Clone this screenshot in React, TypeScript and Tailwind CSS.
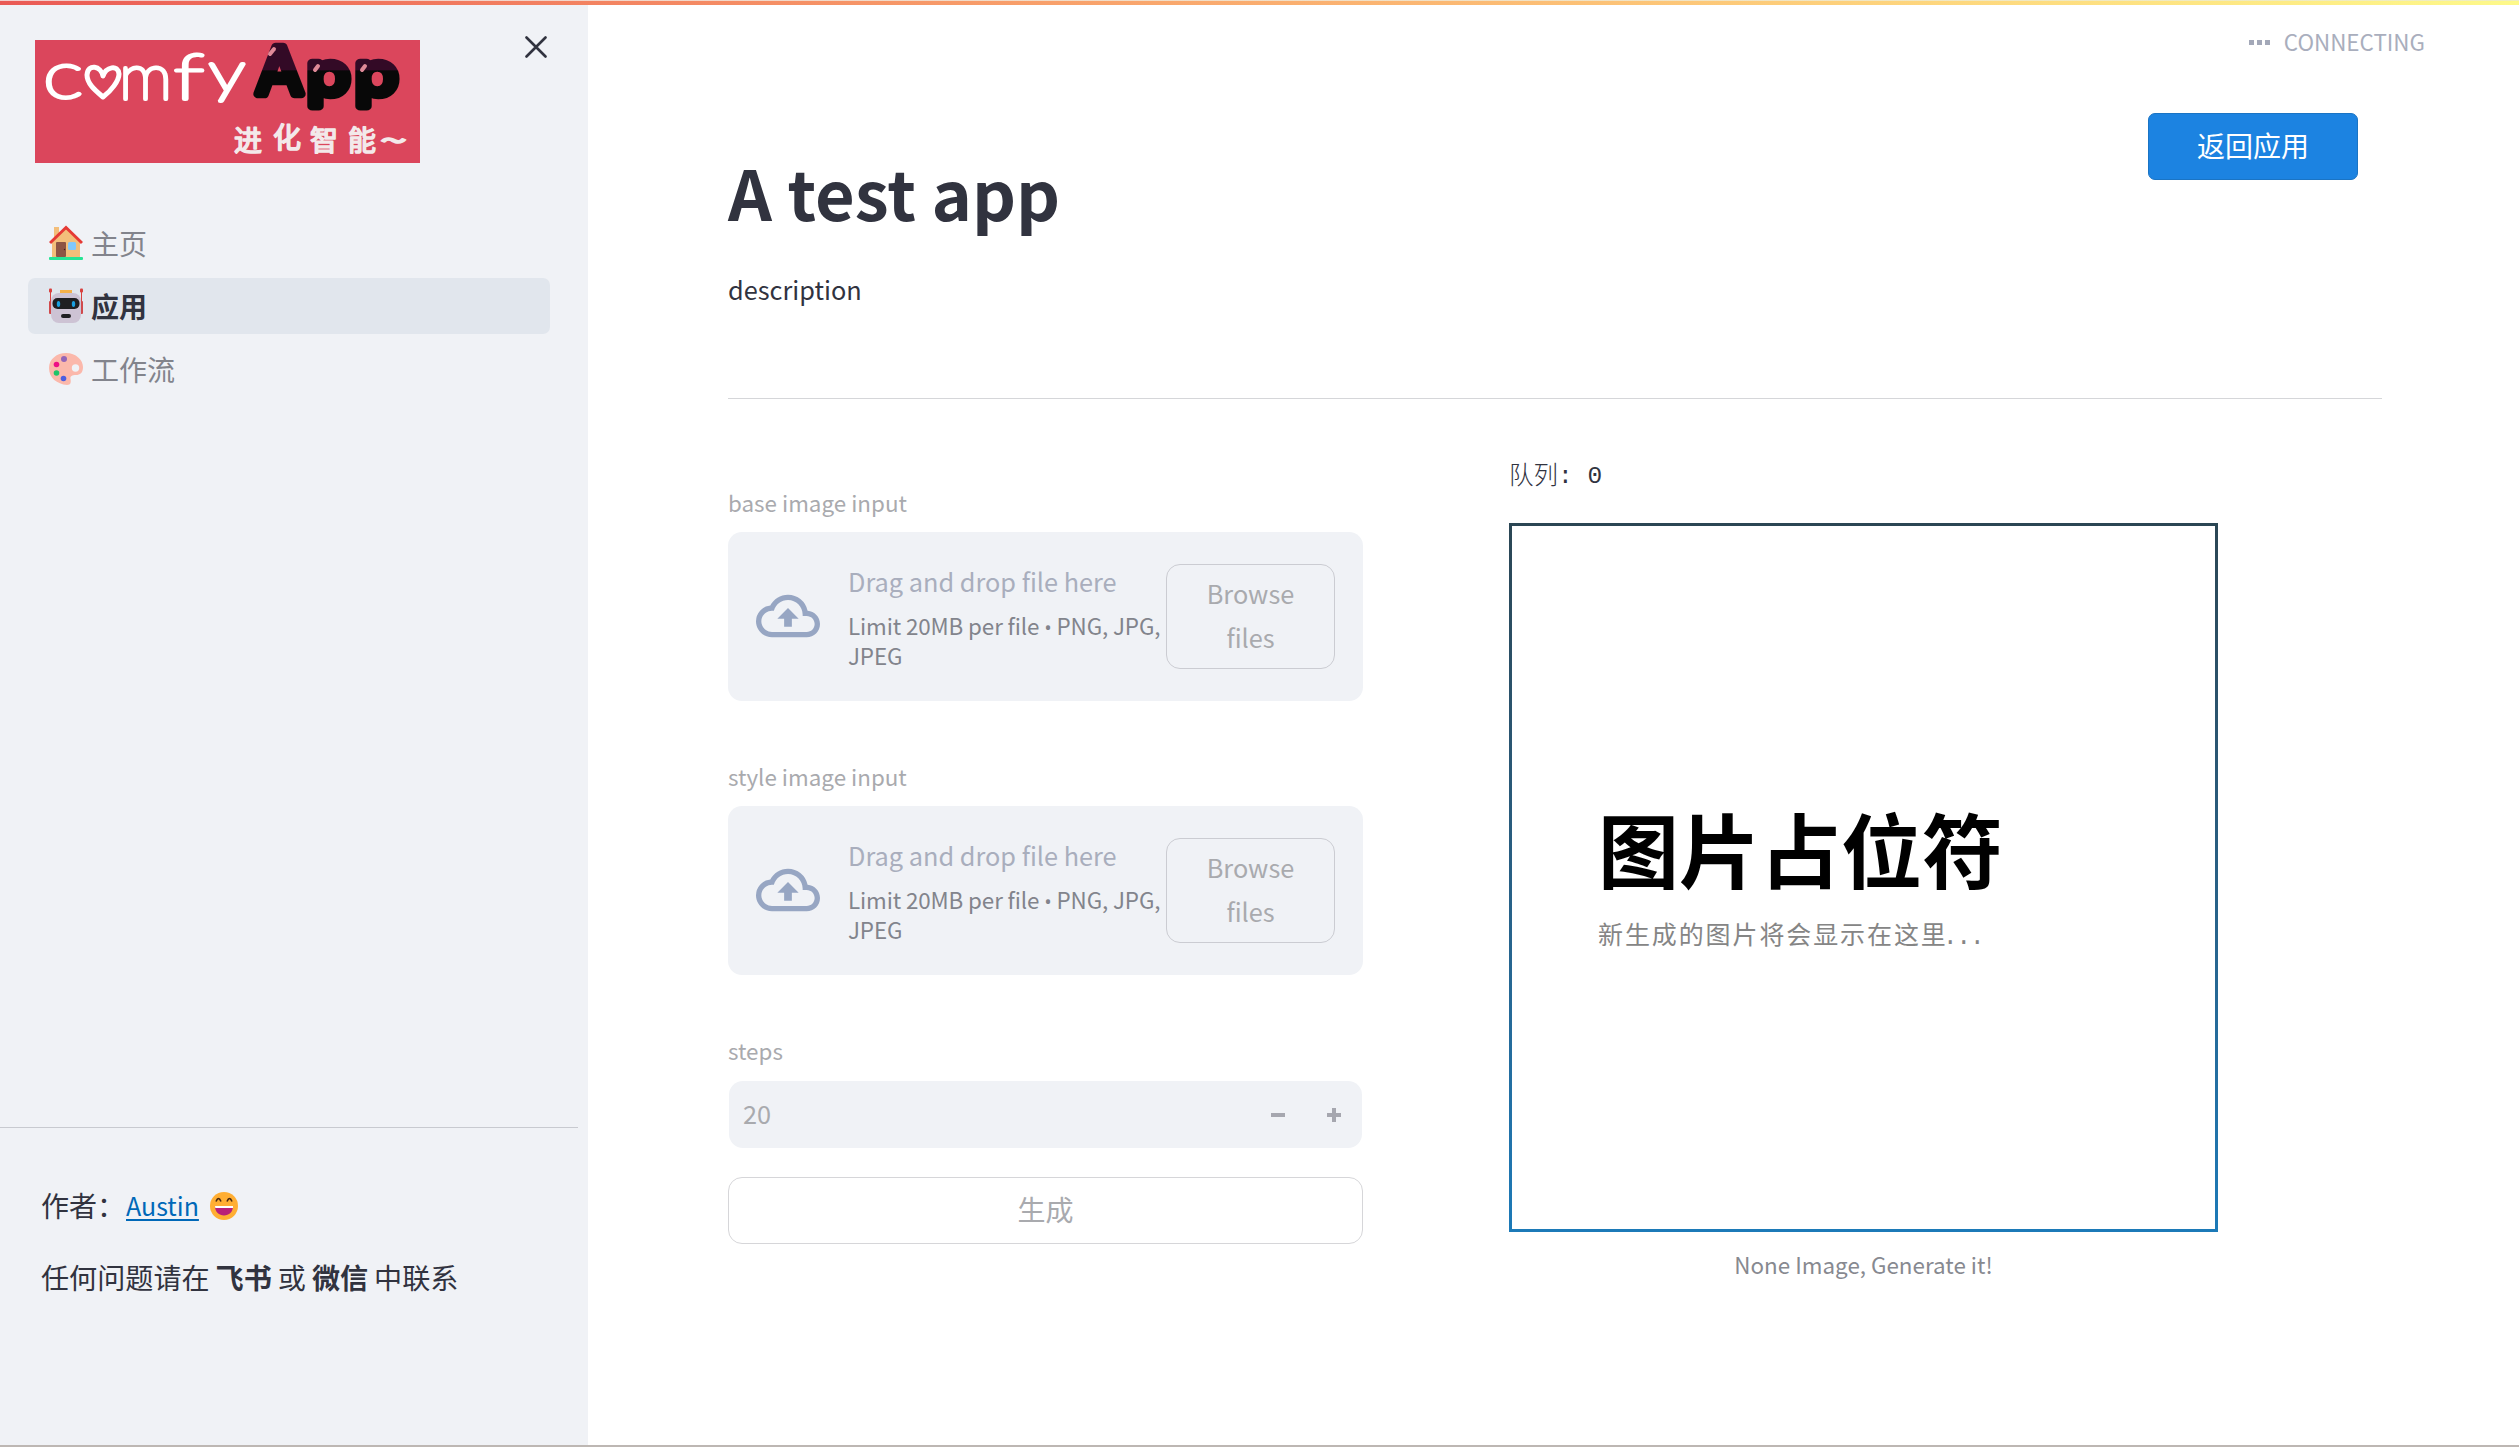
import React from "react";

const latin = "font-['Noto_Sans_CJK_SC','Noto_Sans',sans-serif]";

function Logo() {
  return (
    <svg width="385" height="123" viewBox="0 0 385 123" className="block overflow-visible">
      <defs>
        <linearGradient id="ink" gradientUnits="userSpaceOnUse" x1="0" y1="0" x2="0" y2="123">
          <stop offset="0.244" stopColor="#330a26" />
          <stop offset="0.25" stopColor="#080808" />
        </linearGradient>
      </defs>
      <rect width="385" height="123" fill="#db465c" />
      <g
        fill="#fff"
        stroke="#fff"
        strokeWidth="3.8"
        strokeLinejoin="round"
        strokeLinecap="round"
        fontFamily="Lato, sans-serif"
        fontWeight="100"
      >
        <text x="8" y="58" fontSize="66" textLength="40" lengthAdjust="spacingAndGlyphs">c</text>
        <text x="84" y="59" fontSize="64" textLength="53" lengthAdjust="spacingAndGlyphs">m</text>
        <text x="139" y="59" fontSize="62" textLength="30" lengthAdjust="spacingAndGlyphs">f</text>
        <text x="174" y="51" fontSize="54" textLength="36" lengthAdjust="spacingAndGlyphs">y</text>
      </g>
      <path
        d="M68 36 C66 26 53 23 52 35 C52 44 61 51 68 57 C76 51 84 41 84 34 C83 24 71 27 68 36 Z"
        fill="none"
        stroke="#fff"
        strokeWidth="5"
        strokeLinejoin="round"
      />
      <g
        fill="url(#ink)"
        stroke="url(#ink)"
        strokeWidth="8.5"
        strokeLinejoin="round"
        fontFamily="Inter, sans-serif"
        fontWeight="400"
      >
        <text x="221" y="54" fontSize="65" textLength="47" lengthAdjust="spacingAndGlyphs">A</text>
        <text x="272" y="55" fontSize="58" textLength="43" lengthAdjust="spacingAndGlyphs">p</text>
        <text x="320" y="55" fontSize="58" textLength="43" lengthAdjust="spacingAndGlyphs">p</text>
      </g>
      <g fill="none" stroke="#e08a98" strokeWidth="4" strokeLinecap="round">
        <path d="M235 14 l4 -5" />
        <path d="M280 30 l3 -4" />
        <path d="M327 30 l3 -4" />
      </g>
      <g
        fill="#f3e9ea"
        stroke="#f3e9ea"
        strokeWidth="1.6"
        strokeLinejoin="round"
        fontSize="28"
        fontWeight="400"
        fontFamily="'Noto Sans CJK SC', sans-serif"
      >
        <text x="199" y="111">进</text>
        <text x="238" y="108">化</text>
        <text x="275" y="111">智</text>
        <text x="313" y="111">能</text>
        <text x="345" y="111" textLength="27" lengthAdjust="spacingAndGlyphs">~</text>
      </g>
    </svg>
  );
}

function House() {
  return (
    <svg width="34" height="36" viewBox="0 0 34 36">
      <rect x="5" y="2" width="5" height="12" fill="#f3be7a" />
      <path d="M3 17 L17 3 L31 17 V32 H3 Z" fill="#f3be7a" />
      <path d="M1 18 L17 2.500 L33 18" fill="none" stroke="#e53a35" strokeWidth="3" />
      <rect x="7" y="17" width="10" height="15" rx="1" fill="#8d5444" />
      <circle cx="15.500" cy="24.500" r="0.700" fill="#3a1f18" />
      <rect x="19" y="17" width="8" height="8" rx="1.500" fill="#82c8fb" />
      <rect x="0" y="32" width="34" height="3" rx="1" fill="#26e494" />
    </svg>
  );
}

function Robot() {
  return (
    <svg width="34" height="36" viewBox="0 0 34 36">
      <path d="M1.500 2 V16 M32.500 2 V16" stroke="#d8403e" strokeWidth="1" />
      <rect x="0" y="0.500" width="3" height="4" rx="1" fill="#d8403e" />
      <rect x="31" y="0.500" width="3" height="4" rx="1" fill="#d8403e" />
      <rect x="0" y="13" width="3" height="13" rx="1" fill="#d04a4c" />
      <rect x="31" y="13" width="3" height="13" rx="1" fill="#d04a4c" />
      <rect x="2" y="5" width="30" height="30" rx="8" fill="#cdc3d4" />
      <rect x="11" y="2" width="12" height="3" fill="#f5b14a" />
      <rect x="3.500" y="10" width="27" height="11" rx="5" fill="#1f1f22" />
      <ellipse cx="9.500" cy="16" rx="1.700" ry="3" fill="#1a9fe0" />
      <ellipse cx="24.500" cy="16" rx="1.700" ry="3" fill="#1a9fe0" />
      <rect x="12" y="26" width="10" height="4" rx="2" fill="#1f1f22" />
    </svg>
  );
}

function Palette() {
  return (
    <svg width="34" height="36" viewBox="0 0 34 36">
      <path
        d="M17 2 C27 2 34 9 34 16 C34 22 31 24 27 24 C23 24 21 25 21.500 28 C22 31 22 34 18 34 C8 33 0 27 0 17 C0 8 8 2 17 2 Z"
        fill="#fbb8ab"
      />
      <circle cx="26.500" cy="17" r="3.700" fill="#f0f2f6" />
      <circle cx="15" cy="8" r="3" fill="#9265b8" />
      <circle cx="7.500" cy="13.500" r="2.800" fill="#ee0f86" />
      <circle cx="7.500" cy="22" r="2.800" fill="#1fc468" />
      <circle cx="14.500" cy="27.500" r="2.800" fill="#4c5fe0" />
    </svg>
  );
}

function Smile() {
  return (
    <svg width="28" height="28" viewBox="0 0 28 28" className="mt-0.5 shrink-0">
      <circle cx="14" cy="14" r="14" fill="#ffae33" />
      <path d="M6 9.500 Q8.500 3.500 11 9.500 M17 9.500 Q19.500 3.500 22 9.500" fill="none" stroke="#47260f" strokeWidth="1.600" />
      <path d="M5 14 H23 C23 20 19 23.500 14 23.500 C9 23.500 5 20 5 14 Z" fill="#b91f78" />
      <path d="M5 14 H23 V16 H5.300 Z" fill="#fff" />
    </svg>
  );
}

function NavItem({ icon, label, active }: { icon: React.ReactNode; label: string; active?: boolean }) {
  return (
    <a
      className={
        active
          ? "flex h-14 items-center gap-2 rounded-[7px] bg-[#e1e6ed] pl-[21px] text-[28px] font-bold leading-none text-[#31333f]"
          : "flex h-14 items-center gap-2 rounded-[7px] pl-[21px] text-[28px] leading-none text-[#82848c]"
      }
    >
      {icon}
      <span className="-mt-px">{label}</span>
    </a>
  );
}

function Uploader({ label }: { label: string }) {
  return (
    <div className="mb-[60px]">
      <div className="mb-[15px] h-[30px] text-[22.4px] leading-[30px] text-[#a9aaae]">{label}</div>
      <div className="flex h-[169px] items-center rounded-[14px] bg-[#f0f2f6] pr-7 pl-[28px]">
        <svg width="64" height="64" viewBox="0 0 24 24" fill="#97a6c3" className="-mt-0.5 shrink-0">
          <path d="M19.350 10.040A7.490 7.490 0 0 0 12 4C9.110 4 6.600 5.640 5.350 8.040A5.994 5.994 0 0 0 0 14c0 3.310 2.690 6 6 6h13c2.760 0 5-2.240 5-5 0-2.640-2.050-4.780-4.650-4.960zM19 18H6c-2.210 0-4-1.790-4-4s1.790-4 4-4h.71C7.370 7.690 9.480 6 12 6c3.040 0 5.500 2.460 5.500 5.500v.5H19c1.660 0 3 1.340 3 3s-1.340 3-3 3zM8 13h2.550v3h2.900v-3H16l-4-4z" />
        </svg>
        <div className="-mt-[2px] ml-7 w-[318px] shrink-0">
          <div className="mb-[9px] text-[25.3px] leading-10 whitespace-nowrap text-[#a9aebd]">
            Drag and drop file here
          </div>
          <div className="text-[22.4px] leading-[30px] tracking-[-0.12px] whitespace-nowrap text-[#82848c]">
            Limit 20MB per file <span className="font-['Open_Sans',sans-serif] text-[20px] leading-none">•</span> PNG, JPG,
            <br />
            JPEG
          </div>
        </div>
        <button className="h-[105px] w-[169px] shrink-0 rounded-[14px] border border-[#cbccd2] pb-[3px] text-[25.3px] leading-[44px] text-[#a9aaae]">
          Browse
          <br />
          files
        </button>
      </div>
    </div>
  );
}

export default function App() {
  return (
    <div className={`flex h-[1447px] w-[2519px] flex-col overflow-hidden bg-white text-[#31333f] ${latin}`}>
      <div className="h-px shrink-0 bg-gradient-to-r from-[#f3cfce] to-[#efeec0]" />
      <div className="h-1 shrink-0 bg-gradient-to-r from-[#ea5a55] to-[#fdf98a]" />
      <div className="flex min-h-0 flex-1">
        <aside className="flex w-[588px] shrink-0 flex-col bg-[#f0f2f6]">
          <div className="flex items-start justify-between pt-[35px] pr-[41px] pl-[35px]">
            <Logo />
            <svg width="22" height="22" viewBox="0 0 22 22" className="-mt-1">
              <path d="M1.500 1.500 L20.500 20.500 M20.500 1.500 L1.500 20.500" stroke="#31333f" strokeWidth="2.600" strokeLinecap="round" />
            </svg>
          </div>
          <nav className="mt-[52px] ml-7 flex w-[522px] flex-col gap-[7px]">
            <NavItem icon={<House />} label="主页" />
            <NavItem icon={<Robot />} label="应用" active />
            <NavItem icon={<Palette />} label="工作流" />
          </nav>
          <div className="mt-[730px] h-px w-[578px] bg-[#c8cad0]" />
          <div className="mt-[57px] ml-[41px] flex h-10 items-center text-[28px] leading-10 whitespace-nowrap">
            <span className="w-[85px]">作者：</span>
            <a className="mr-[11px] text-[25px] text-[#0068b8] underline decoration-2 underline-offset-[3px]">Austin</a>
            <Smile />
          </div>
          <div className="mt-[32px] ml-[41px] flex h-10 items-center gap-[6px] text-[28.1px] leading-10 whitespace-nowrap">
            <span>任何问题请在</span>
            <b>飞书</b>
            <span>或</span>
            <b>微信</b>
            <span>中联系</span>
          </div>
        </aside>

        <main className="flex flex-1 flex-col pl-[140px]">
          <header className="flex h-[80px] items-start justify-end pt-[17px] pr-[94px]">
            <div className="flex h-10 items-center gap-[14px] text-[22.4px] text-[#a9aebd]">
              <div className="flex gap-[3px]">
                <i className="size-[5px] bg-[#a3a8b8]" />
                <i className="size-[5px] bg-[#a3a8b8]" />
                <i className="size-[5px] bg-[#a3a8b8]" />
              </div>
              CONNECTING
            </div>
          </header>

          <section className="flex h-[314px] w-[1654px] justify-between border-b border-[#d5d6d9] pr-[24px]">
            <div className="pt-[67px]">
              <h1 className="text-[68.5px] leading-[80px] font-bold">A test app</h1>
              <p className="mt-[37px] text-[25.3px] leading-10">description</p>
            </div>
            <button className="mt-[28px] h-[67px] w-[210px] rounded-[7px] border border-[#1a74c4] bg-[#1c83e1] pb-[3px] text-[28px] text-white">
              返回应用
            </button>
          </section>

          <div className="flex">
            <section className="w-[635px] pt-[88px]">
              <Uploader label="base image input" />
              <Uploader label="style image input" />
              <div className="h-[30px] text-[22.4px] leading-[30px] text-[#a9aaae]">steps</div>
              <div className="mx-px mt-4 flex h-[67px] items-center rounded-[14px] bg-[#f0f2f6] pr-[21px] pl-3.5 text-[25.3px] text-[#a9aaae]">
                <span className="flex-1 pb-0.5">20</span>
                <svg width="14" height="14" viewBox="0 0 14 14" className="mr-[42px]">
                  <rect y="5" width="14" height="4" fill="#a6a7af" />
                </svg>
                <svg width="14" height="14" viewBox="0 0 14 14">
                  <path d="M5 0 H9 V5 H14 V9 H9 V14 H5 V9 H0 V5 H5 Z" fill="#a6a7af" />
                </svg>
              </div>
              <button className="mt-[29px] h-[67px] w-full rounded-[14px] border border-[#d6d6d9] pb-[3px] text-[28px] text-[#a9aaae]">
                生成
              </button>
            </section>

            <section className="ml-[146px] w-[709px] pt-[61px]">
              <div className="flex h-[30px] items-center font-['Liberation_Mono','Noto_Sans_CJK_SC',monospace] text-[24.5px] leading-[30px] whitespace-pre">
                <span className="-mt-[3px] font-['Noto_Sans_CJK_SC',sans-serif] font-light">队列</span>
                <span className="mt-[3px]">: 0</span>
              </div>
              <div className="mt-[33px] h-[709px] bg-gradient-to-b from-[#2b4654] to-[#1c7ab8] p-[3px]">
                <div className="h-full bg-white pt-[271px] pl-[86px]">
                  <div className="text-[81px] leading-[100px] font-bold whitespace-nowrap text-black">图片占位符</div>
                  <div className="mt-[16px] text-[25px] leading-[40px] tracking-[1.9px] whitespace-nowrap text-[#858585]">
                    新生成的图片将会显示在这里
                    <span className="-ml-[5px] font-['Liberation_Mono',monospace] tracking-[-1.5px]">...</span>
                  </div>
                </div>
              </div>
              <p className="mt-[12px] text-center text-[22.4px] leading-10 text-[#878990]">
                None Image, Generate it!
              </p>
            </section>
          </div>
        </main>
      </div>
      <div className="h-0.5 shrink-0 bg-[#bdb7b3]" />
    </div>
  );
}
